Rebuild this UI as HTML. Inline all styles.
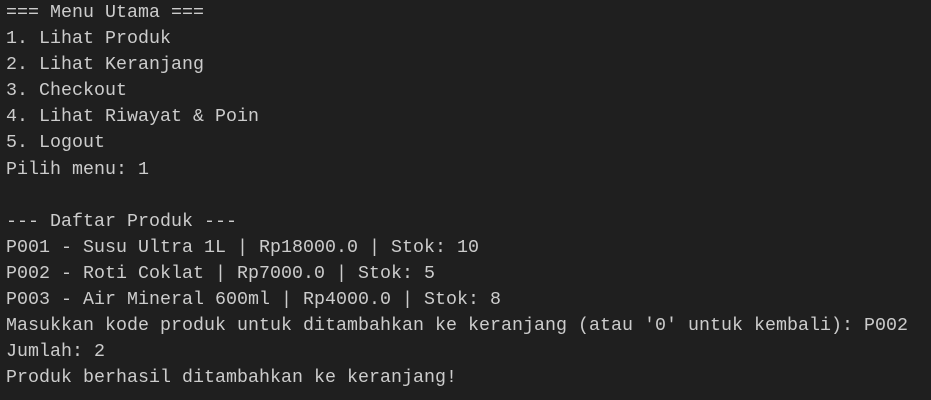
<!DOCTYPE html>
<html><head><meta charset="utf-8"><style>
html,body{margin:0;padding:0;background:#1f1f1f;width:931px;height:400px;overflow:hidden}
pre{margin:0;position:absolute;left:6px;top:0px;font-family:"Liberation Mono",monospace;font-size:18.3px;letter-spacing:0.03px;line-height:26.1px;color:#cccccc}
</style></head><body><pre>=== Menu Utama ===
1. Lihat Produk
2. Lihat Keranjang
3. Checkout
4. Lihat Riwayat &amp; Poin
5. Logout
Pilih menu: 1

--- Daftar Produk ---
P001 - Susu Ultra 1L | Rp18000.0 | Stok: 10
P002 - Roti Coklat | Rp7000.0 | Stok: 5
P003 - Air Mineral 600ml | Rp4000.0 | Stok: 8
Masukkan kode produk untuk ditambahkan ke keranjang (atau '0' untuk kembali): P002
Jumlah: 2
Produk berhasil ditambahkan ke keranjang!</pre></body></html>
